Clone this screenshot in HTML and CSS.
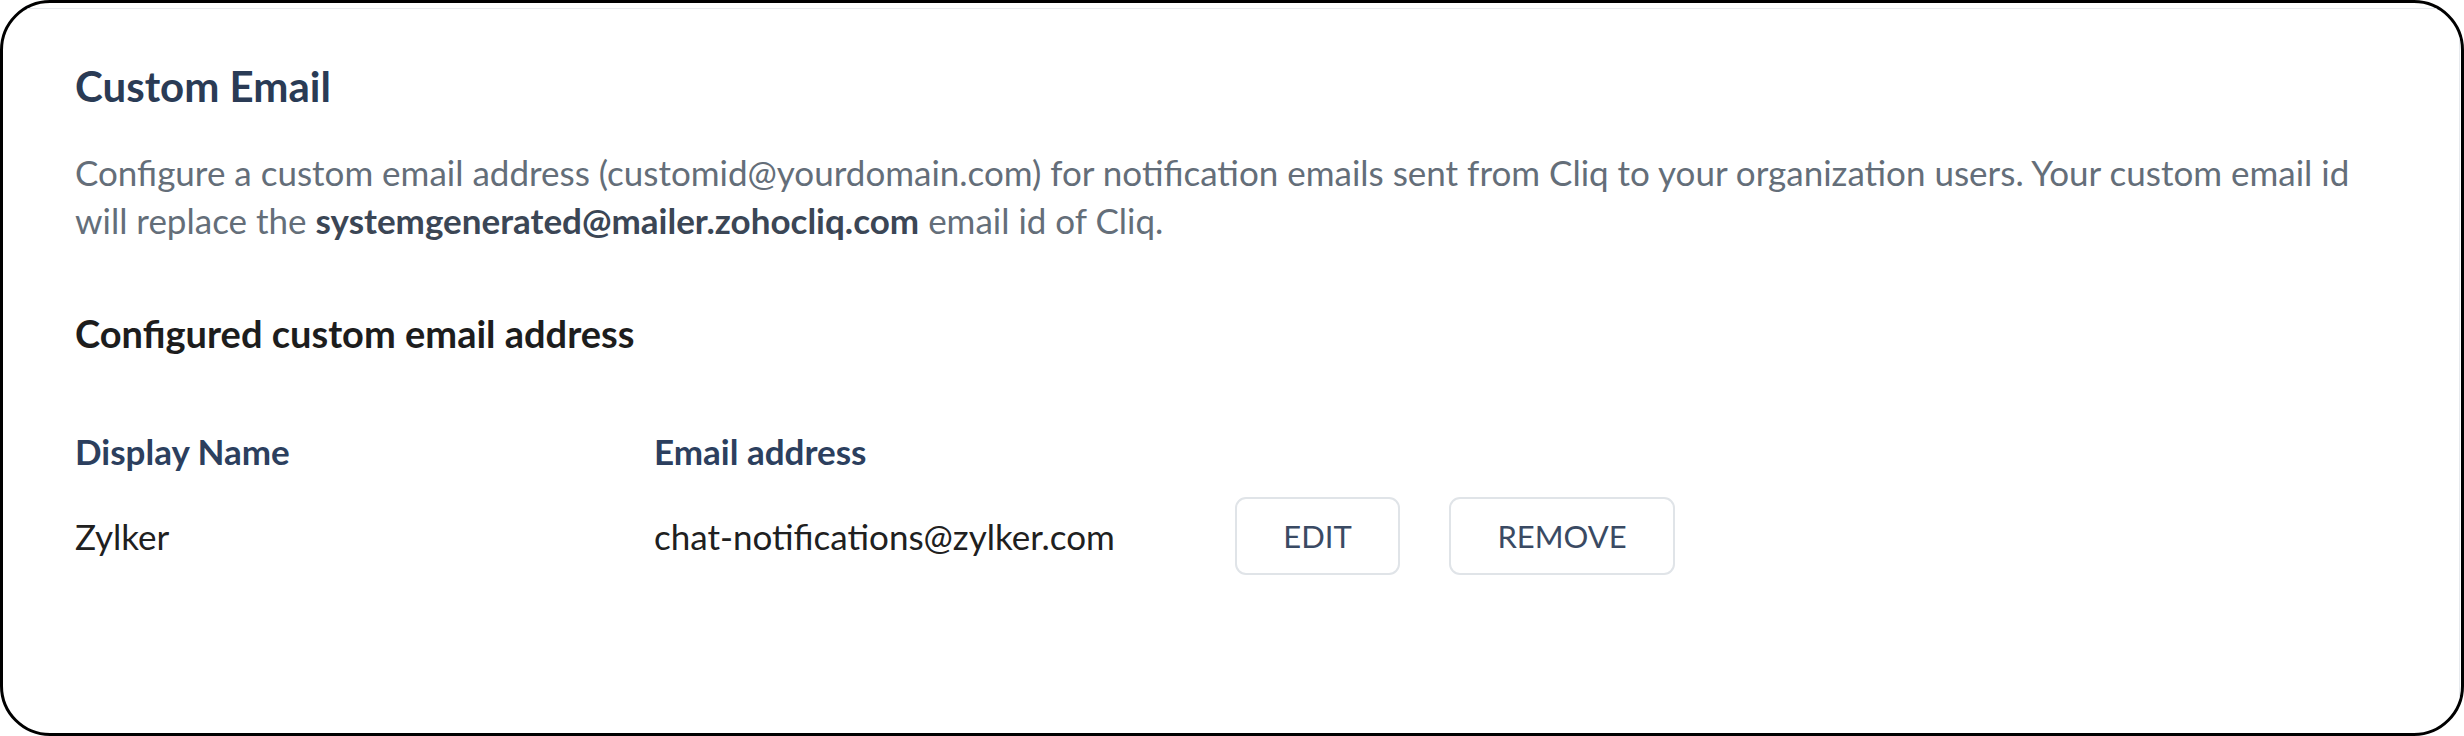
FILE: index.html
```html
<!DOCTYPE html>
<html lang="en">
<head>
  <meta charset="UTF-8" />
  <meta name="viewport" content="width=device-width, initial-scale=1.0"/>
  <title>Custom Email</title>
  <link rel="stylesheet" href="styles.css">
</head>
<body>
  <div class="frame">
    <div class="card">
      <h2 class="title">Custom Email</h2>
      <p class="desc">
        Configure a custom email address (customid@yourdomain.com) for notification emails sent from Cliq to your organization users. Your custom email id
        will replace the <b>systemgenerated@mailer.zohocliq.com</b> email id of Cliq.
      </p>

      <h3 class="subtitle">Configured custom email address</h3>

      <div class="table">
        <div class="th">Display Name</div>
        <div class="th">Email address</div>
        <div></div>

        <div class="td">Zylker</div>
        <div class="td">chat-notifications@zylker.com</div>
        <div class="actions">
          <button type="button" class="btn btn-edit">EDIT</button>
          <button type="button" class="btn btn-remove">REMOVE</button>
        </div>
      </div>
    </div>
  </div>
</body>
</html>
```

FILE: styles.css
```css
html, body {
  margin: 0;
  padding: 0;
  background: #fff;
}
body {
  font-family: Lato, "Open Sans", Arial, sans-serif;
}
.frame {
  height: 736px;
  box-sizing: border-box;
  border: 3px solid #000;
  border-radius: 50px;
  overflow: hidden;
  background: #fff;
}
.card {
  margin-top: 5px;
  margin-right: 1px;
  height: calc(100% - 5px);
  box-sizing: border-box;
  border-top: 1px solid #e7eaee;
  border-right: 1px solid #e7eaee;
  padding-left: 72px;
}
.title {
  margin: 55px 0 0;
  font-size: 42px;
  line-height: 44px;
  font-weight: 700;
  color: #2a3b55;
}
.desc {
  margin: 40px 0 0;
  font-size: 35px;
  line-height: 48px;
  color: #646e79;
  width: 2300px;
}
.desc b {
  color: #3b4655;
  font-weight: 700;
}
.subtitle {
  margin: 69px 0 0;
  font-size: 38px;
  line-height: 40px;
  font-weight: 700;
  color: #1d1d1d;
}
.table {
  margin-top: 78px;
  display: grid;
  grid-template-columns: 579px 581px auto;
  row-gap: 26px;
  align-items: center;
}
.th {
  font-size: 35px;
  line-height: 40px;
  font-weight: 700;
  color: #2c3f5e;
}
.td {
  font-size: 35px;
  line-height: 40px;
  color: #202020;
}
.actions {
  display: flex;
  gap: 49px;
}
.btn {
  height: 78px;
  box-sizing: border-box;
  background: #fff;
  border: 2px solid #e0e4e8;
  border-radius: 11px;
  font-family: Lato, "Open Sans", Arial, sans-serif;
  font-size: 31px;
  color: #3a4a63;
  cursor: pointer;
}
.btn-edit {
  width: 165px;
}
.btn-remove {
  width: 226px;
}
```
